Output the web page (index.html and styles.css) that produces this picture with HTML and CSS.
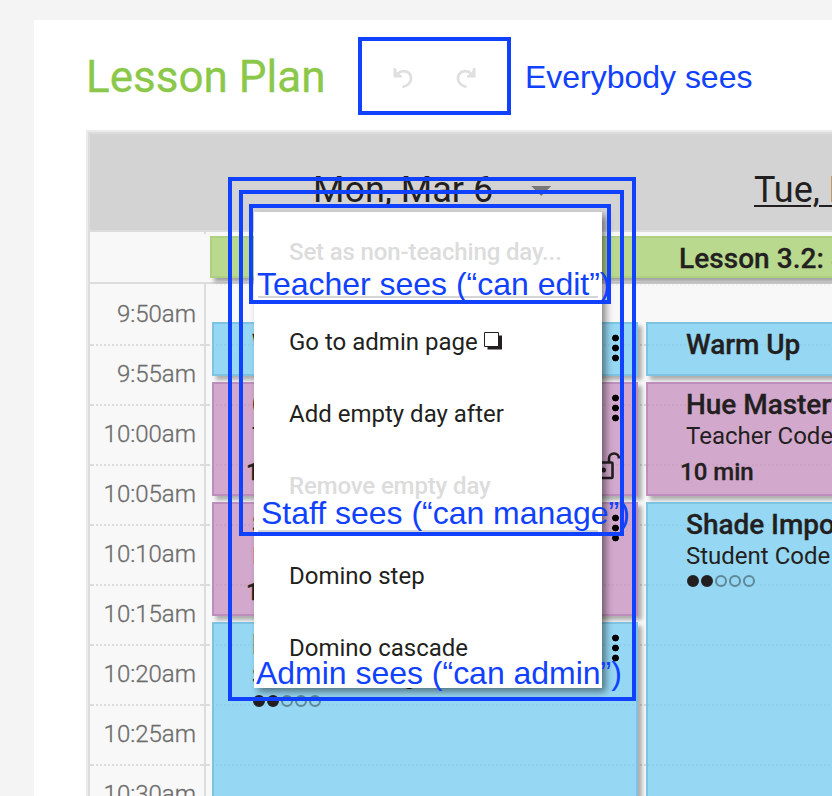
FILE: index.html
```html
<!DOCTYPE html>
<html lang="en">
<head>
<meta charset="utf-8">
<title>Lesson Plan</title>
<link rel="stylesheet" href="styles.css">
</head>
<body>
<main class="page">
  <header class="toolbar">
    <h1>Lesson Plan</h1>
    <div class="history">
      <svg class="undo" viewBox="0 0 22 22"><path d="M4.500 7C10 1.500 18 4.500 18 11.500C18 16 14 19 9.500 20"/><path class="head" d="M.5 1L3 1L4 6L9 8.500V10.500H.5Z"/></svg>
      <svg class="redo" viewBox="0 0 22 22"><path d="M4.500 7C10 1.500 18 4.500 18 11.500C18 16 14 19 9.500 20"/><path class="head" d="M.5 1L3 1L4 6L9 8.500V10.500H.5Z"/></svg>
    </div>
    <span class="note everybody">Everybody sees</span>
  </header>

  <section class="calendar">
    <div class="days">
      <div class="corner"></div>
      <div class="day first"><span>Mon, Mar 6</span><i class="caret"></i></div>
      <div class="day second"><span class="link">Tue, Mar 7</span></div>
    </div>
    <div class="lesson-row"><div class="lesson"><span>Lesson 3.2: Shades</span></div></div>
    <div class="schedule">
      <div class="times">
        <div>9:50am</div><div>9:55am</div><div>10:00am</div><div>10:05am</div><div>10:10am</div><div>10:15am</div><div>10:20am</div><div>10:25am</div><div>10:30am</div>
      </div>
      <div class="column one">
        <article class="card blue short"><h2>Warm Up</h2><i class="more"></i></article>
        <article class="card pink"><h2>Color</h2><p>Teacher</p><b>10 min</b><i class="more"></i>
          <svg class="lock" viewBox="0 0 24 30"><rect x="1.5" y="11.500" width="15" height="15.500" rx="1"/><path d="M13 11.500V7.500a5 5 0 0 1 10 0"/><circle cx="7.500" cy="19" r="1.200"/></svg>
        </article>
        <article class="card pink"><h2>Shade</h2><p>Finger</p><b>10 min</b><i class="more"></i></article>
        <article class="card blue tall"><h2>Hue</h2><p>Student Coding</p>
          <div class="dots"><i class="on"></i><i class="on"></i><i></i><i></i><i></i></div><i class="more"></i></article>
      </div>
      <div class="column two">
        <article class="card blue short"><h2>Warm Up</h2></article>
        <article class="card pink"><h2>Hue Mastery</h2><p>Teacher Code</p><b>10 min</b></article>
        <article class="card blue tall"><h2>Shade Importer</h2><p>Student Code</p>
          <div class="dots"><i class="on"></i><i class="on"></i><i></i><i></i><i></i></div></article>
      </div>
    </div>
  </section>
</main>

<nav class="menu">
  <div class="group teacher"><a class="off">Set as non-teaching day...</a></div>
  <div class="group staff"><a>Go to admin page <svg class="window" viewBox="0 0 18 18"><path class="back" d="M3.500 3.500H18V17.500H3.500Z"/><path class="front" d="M.5 .5H14.500V14.500H.5Z"/></svg></a><a>Add empty day after</a><a class="off">Remove empty day</a></div>
  <div class="group"><a>Domino step</a><a>Domino cascade</a></div>
</nav>

<div class="frame frame-admin"></div>
<div class="frame frame-staff"></div>
<div class="frame frame-teacher"></div>
<span class="note over teacher-note">Teacher sees (“can edit”)</span>
<span class="note over staff-note">Staff sees (“can manage”)</span>
<span class="note over admin-note">Admin sees (“can admin”)</span>
</body>
</html>
```
FILE: styles.css
```css
* { box-sizing: border-box; }
html, body { margin: 0; width: 832px; height: 796px; overflow: hidden; }
body { position: relative; background: #f4f4f4; color: #231f20; font-family: Roboto, sans-serif; padding: 20px 0 0 34px; }
h1, h2, p { margin: 0; font-weight: 400; }
.page { background: #fff; height: 776px; padding-left: 52px; overflow: hidden; }
.toolbar { height: 110px; display: flex; align-items: flex-start; }
h1 { width: 272px; color: #8bc84a; font-size: 44px; line-height: 52px; padding-top: 31px; white-space: nowrap; -webkit-text-stroke: .3px #8bc84a; }
.history { width: 153px; height: 78px; margin-top: 17px; border: 4px solid #1041ff; display: flex; align-items: center; justify-content: center; gap: 39px; padding-top: 4px; }
.history svg { width: 22px; height: 22px; fill: none; stroke: #dfdfdf; stroke-width: 2.8; }
.history .head { fill: #dfdfdf; stroke: none; }
.history .redo { transform: scaleX(-1); }
.note { font: 32px/36px "Liberation Sans", sans-serif; color: #1041ff; white-space: nowrap; letter-spacing: -.02px; }
.everybody { margin: 39px 0 0 14px; }

.calendar { width: 1000px; border: 2px solid #ebebeb; height: 800px; background: #f8f8f8; }
.days { height: 100px; border: 2px solid #dcdcdc; border-right: 0; background: #d3d3d3; display: flex; font-size: 36px; line-height: 42px; padding-top: 35px; white-space: nowrap; }
.corner { width: 116px; }
.first { width: 434px; padding-left: 107px; display: flex; gap: 38px; }
.caret { width: 20px; height: 10px; margin-top: 17px; background: #777; clip-path: polygon(0 0, 100% 0, 50% 100%); }
.second { padding-left: 114px; }
.link { text-decoration: underline; text-decoration-thickness: 2px; text-underline-offset: 3px; }
.lesson-row { height: 52px; border-left: 2px solid #dcdcdc; border-bottom: 2px solid #dcdcdc; padding: 4px 0 0 120px; background: linear-gradient(#dcdcdc, #dcdcdc) 114px 0 / 2px 2px no-repeat; }
.lesson { height: 42px; border: 2px solid #afd080; background: #b8d98e; box-shadow: 4px 4px 4px rgba(0,0,0,.35); padding-left: 467px; font-size: 28px; line-height: 42px; font-weight: 500; letter-spacing: .05px; -webkit-text-stroke: .3px; white-space: nowrap; }

/* dotted rules every five minutes, solid where they meet the time column */
.schedule {
  height: 600px; border-left: 2px solid #dcdcdc; display: flex; background:
    repeating-linear-gradient(90deg, #f8f8f8 0 2px, transparent 2px 4px) 4px 0 / 106px 100% no-repeat,
    repeating-linear-gradient(90deg, #f8f8f8 0 2px, transparent 2px 4px) 120px 0 / 876px 100% no-repeat,
    repeating-linear-gradient(#dcdcdc 0 2px, #f8f8f8 2px 60px) 0 60px / 100% 100% no-repeat;
}
.times { flex: none; width: 116px; border-right: 2px solid #dcdcdc; color: #6c6c6c; font-size: 24px; text-align: right; font-weight: 300; -webkit-text-stroke: .3px; }
.times div { height: 60px; line-height: 60px; padding-right: 8px; }
.column { flex: none; width: 434px; padding: 38px 2px 0 6px; display: flex; flex-direction: column; gap: 6px; }
.column.two { width: 500px; }
.card { position: relative; flex: none; height: 114px; padding: 6px 0 0 38px; border: 2px solid; box-shadow: 4px 4px 4px rgba(0,0,0,.3); white-space: nowrap; }
.short { height: 54px; padding-top: 6px; }
.tall { height: 400px; }
.blue { background: rgba(117,204,241,.75); border-color: #7ec3e2; background-clip: padding-box; }
.pink { background: rgba(197,141,191,.75); border-color: #bd8ebc; background-clip: padding-box; }
h2 { font-size: 28px; line-height: 30px; font-weight: 500; color: #231f20; letter-spacing: -.05px; -webkit-text-stroke: .3px; }
.card p { font-size: 24px; line-height: 32px; }
.card b { display: block; font-size: 24px; line-height: 30px; font-weight: 500; margin: 5px 0 0 -6px; -webkit-text-stroke: .3px; }
.more { position: absolute; right: 17px; top: 9px; width: 7px; height: 30px; background: radial-gradient(circle, #000 3.100px, transparent 3.700px) 0 0 / 7px 10px; }
.lock { position: absolute; right: 16px; top: 67px; width: 24px; height: 30px; fill: none; stroke: #231f20; stroke-width: 2.6; overflow: visible; }
.dots { display: flex; gap: 2px; padding: 3px 0 0 1px; }
.dots i { width: 12px; height: 12px; border: 2px solid #5f8797; border-radius: 50%; }
.dots .on { background: #231f20; border-color: #231f20; }

.menu { position: absolute; left: 254px; top: 212px; width: 348px; height: 476px; background: #fff; box-shadow: 4px 4px 7px rgba(0,0,0,.45); padding: 0 4px; font-size: 24px; }
.menu a { display: block; height: 72px; line-height: 72px; padding-left: 31px; white-space: nowrap; }
.menu .off { color: #dcdcdc; font-weight: 500; letter-spacing: -.14px; }
.group { border-bottom: 2px solid #d5d5d5; }
.group:last-child { border: 0; padding-top: 8px; }
.teacher { height: 86px; padding-top: 4px; }
.staff { height: 234px; padding-top: 8px; }
.window { width: 18px; height: 18px; }
.window .back { fill: #231f20; }
.window .front { fill: #fff; stroke: #231f20; }

.frame { position: absolute; border: 4px solid #1041ff; }
.frame-admin { left: 228px; top: 177px; width: 408px; height: 524px; }
.frame-staff { left: 239px; top: 190px; width: 385px; height: 346px; }
.frame-teacher { left: 249px; top: 204px; width: 362px; height: 100px; }
.over { position: absolute; }
.teacher-note { left: 257px; top: 266px; }
.staff-note { left: 261px; top: 495px; }
.admin-note { left: 256px; top: 655px; }
```
